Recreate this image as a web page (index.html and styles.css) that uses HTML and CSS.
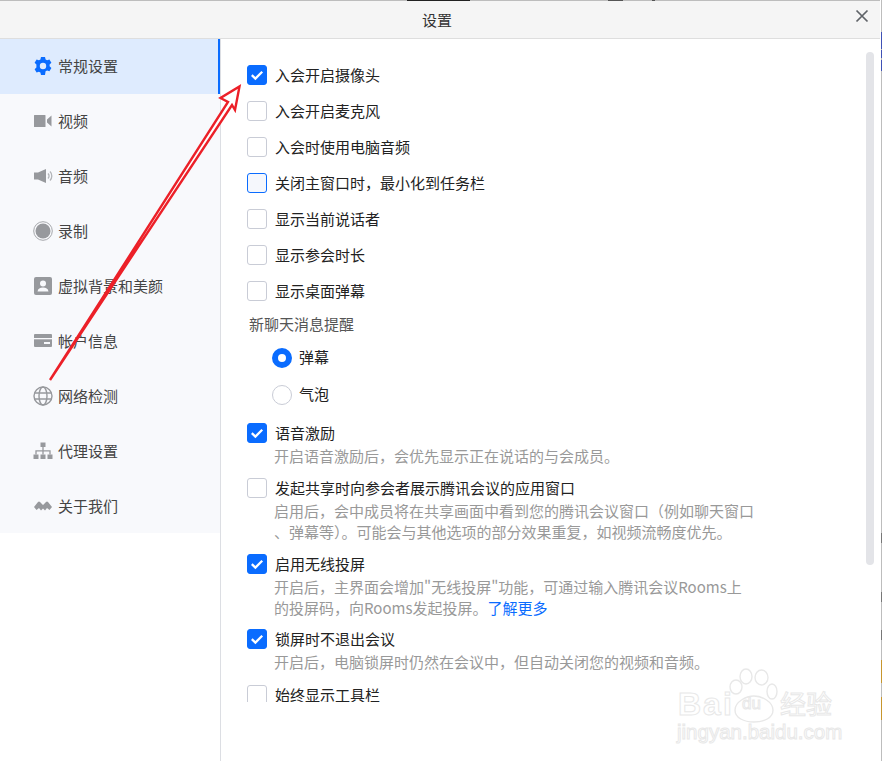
FILE: index.html
```html
<!DOCTYPE html>
<html lang="zh-CN">
<head>
<meta charset="utf-8">
<title>设置</title>
<link rel="stylesheet" href="styles.css">
</head>
<body>
<div class="window">
  <header class="titlebar">
    <span class="title">设置</span>
    <svg class="close" width="14" height="14" viewBox="0 0 14 14"><path d="M1.500 1.500l11 11M12.500 1.500l-11 11" stroke="#5f6368" stroke-width="1.700" fill="none"/></svg>
  </header>
  <div class="body">
    <nav class="side">
      <div class="nav active">
        <svg class="ico" viewBox="0 0 20 20"><path fill="#0a6cff" fill-rule="evenodd" d="M8 1h4l.6 2.400 1.500.8 2.300-.8 2 3.400-1.800 1.700v1.700l1.800 1.700-2 3.400-2.300-.8-1.500.8L12 19H8l-.6-2.400-1.500-.8-2.300.8-2-3.400 1.800-1.700V8.500L1.600 6.800l2-3.400 2.300.8 1.500-.8zM10 6.800a3.200 3.200 0 1 0 0 6.400 3.200 3.200 0 0 0 0-6.400z"/></svg>
        <span>常规设置</span>
      </div>
      <div class="nav">
        <svg class="ico" viewBox="0 0 20 20"><path fill="#97999d" d="M1.500 4h10.500a.5.5 0 0 1 .5.5v11a.5.5 0 0 1-.5.5H1.500a.5.5 0 0 1-.5-.5v-11a.5.5 0 0 1 .5-.5zM14 8.500L18.500 4.500v11L14 11.500z"/></svg>
        <span>视频</span>
      </div>
      <div class="nav">
        <svg class="ico" viewBox="0 0 20 20"><path fill="#97999d" d="M1 6.500h4L13 3v14l-8-3.500H1z"/><path fill="none" stroke="#b3b5b9" stroke-width="1.300" d="M15 7.500a3.500 3.500 0 0 1 0 5M17 5.500a6.500 6.500 0 0 1 0 9"/></svg>
        <span>音频</span>
      </div>
      <div class="nav">
        <svg class="ico" viewBox="0 0 20 20"><circle cx="10" cy="10" r="9.300" fill="none" stroke="#a5a7ab" stroke-width="1"/><circle cx="10" cy="10" r="7.500" fill="#97999d"/></svg>
        <span>录制</span>
      </div>
      <div class="nav">
        <svg class="ico" viewBox="0 0 20 20"><rect x="1" y="1" width="18" height="18" rx="2" fill="#97999d"/><circle cx="10" cy="7.500" r="3" fill="#f8f9fc"/><path fill="#f8f9fc" d="M4.500 15.500c.5-3 2.500-4 5.500-4s5 1 5.500 4z"/></svg>
        <span>虚拟背景和美颜</span>
      </div>
      <div class="nav">
        <svg class="ico" viewBox="0 0 20 20"><rect x="1" y="3" width="18" height="13" rx="1" fill="#97999d"/><rect x="1" y="7" width="18" height="1.300" fill="#f8f9fc"/><rect x="11" y="11" width="6" height="2" fill="#f8f9fc"/></svg>
        <span>帐户信息</span>
      </div>
      <div class="nav">
        <svg class="ico" viewBox="0 0 20 20" fill="none" stroke="#97999d" stroke-width="1.400"><circle cx="10" cy="10" r="9"/><ellipse cx="10" cy="10" rx="4" ry="9"/><path d="M1.500 7h17M1.500 13h17"/></svg>
        <span>网络检测</span>
      </div>
      <div class="nav">
        <svg class="ico" viewBox="0 0 20 20"><path fill="#97999d" d="M7.500 1.500h5v4.500h-5zM.5 13.500h5V18h-5zM7.500 13.500h5V18h-5zM14.500 13.500h5V18h-5z"/><path fill="none" stroke="#97999d" stroke-width="1.300" d="M10 6v7.500M3 13.500V9.800h14v3.700"/></svg>
        <span>代理设置</span>
      </div>
      <div class="nav">
        <svg class="ico" viewBox="0 0 20 20"><path fill="#97999d" d="M1 11L5 6Q6 5 7 6L10 9 13 6Q14 5 15 6L19 11 16.500 14 14 12 12 14.500 10 12.500 8 14.500 6 12 3.500 14Z"/></svg>
        <span>关于我们</span>
      </div>
    </nav>
    <main class="main">
      <div class="scroll">
        <div class="opt"><span class="box on"><svg viewBox="0 0 20 20"><path d="M4.800 10.200l3.600 3.400 6.800-6.800" fill="none" stroke="#fff" stroke-width="2.300"/></svg></span><span class="label">入会开启摄像头</span></div>
        <div class="opt"><span class="box"></span><span class="label">入会开启麦克风</span></div>
        <div class="opt"><span class="box"></span><span class="label">入会时使用电脑音频</span></div>
        <div class="opt"><span class="box hover"></span><span class="label">关闭主窗口时，最小化到任务栏</span></div>
        <div class="opt"><span class="box"></span><span class="label">显示当前说话者</span></div>
        <div class="opt"><span class="box"></span><span class="label">显示参会时长</span></div>
        <div class="opt"><span class="box"></span><span class="label">显示桌面弹幕</span></div>
        <div class="group-label">新聊天消息提醒</div>
        <div class="radio-row"><span class="radio on"></span><span class="label">弹幕</span></div>
        <div class="radio-row"><span class="radio"></span><span class="label">气泡</span></div>
        <div class="opt tall gap-voice"><span class="box on"><svg viewBox="0 0 20 20"><path d="M4.800 10.200l3.600 3.400 6.800-6.800" fill="none" stroke="#fff" stroke-width="2.300"/></svg></span><span class="label">语音激励</span></div>
        <p class="desc">开启语音激励后，会优先显示正在说话的与会成员。</p>
        <div class="opt tall gap-share"><span class="box"></span><span class="label">发起共享时向参会者展示腾讯会议的应用窗口</span></div>
        <p class="desc">启用后，会中成员将在共享画面中看到您的腾讯会议窗口（例如聊天窗口<br>、弹幕等）。可能会与其他选项的部分效果重复，如视频流畅度优先。</p>
        <div class="opt tall gap-share"><span class="box on"><svg viewBox="0 0 20 20"><path d="M4.800 10.200l3.600 3.400 6.800-6.800" fill="none" stroke="#fff" stroke-width="2.300"/></svg></span><span class="label">启用无线投屏</span></div>
        <p class="desc">开启后，主界面会增加"无线投屏"功能，可通过输入腾讯会议Rooms上<br>的投屏码，向Rooms发起投屏。<a class="link">了解更多</a></p>
        <div class="opt tall gap-lock"><span class="box on"><svg viewBox="0 0 20 20"><path d="M4.800 10.200l3.600 3.400 6.800-6.800" fill="none" stroke="#fff" stroke-width="2.300"/></svg></span><span class="label">锁屏时不退出会议</span></div>
        <p class="desc">开启后，电脑锁屏时仍然在会议中，但自动关闭您的视频和音频。</p>
        <div class="opt tall gap-bar"><span class="box"></span><span class="label">始终显示工具栏</span></div>
      </div>
      <div class="thumb"></div>
    </main>
  </div>
</div>
<div class="edge"></div>
<svg class="arrow" width="882" height="761" viewBox="0 0 882 761">
  <path d="M50 380 L228 102 L220.500 98 L239.500 86.500 L235 110 L232 105 Z" fill="#fff" stroke="#ec2028" stroke-width="2.400" stroke-linejoin="miter"/>
</svg>
<div class="mark">
  <svg class="paw" width="62" height="62" viewBox="0 0 62 62" fill="none" stroke="#e8e8e8" stroke-width="1.400"><ellipse cx="20" cy="10.500" rx="6" ry="7.500"/><ellipse cx="35.500" cy="11.500" rx="6.500" ry="7.500"/><ellipse cx="46" cy="25.500" rx="5" ry="7.500"/><ellipse cx="10" cy="21" rx="6" ry="7"/><path d="M9 44C9 36 20 30 28 30S47 36 47 44C47 52 38 56 28 56S9 52 9 44Z"/></svg>
  <span class="mark-bai">Bai</span><span class="mark-du">du</span><span class="mark-jy">经验</span>
  <span class="mark-url">jingyan.baidu.com</span>
</div>
</body>
</html>
```

FILE: styles.css
```css
* { box-sizing: border-box; }
html, body { margin: 0; padding: 0; background: #fff; }
body {
  position: relative;
  width: 882px;
  height: 761px;
  overflow: hidden;
  font-family: "Noto Sans CJK SC", "Noto Sans", sans-serif;
  font-size: 15px;
  color: #222;
}
.window {
  width: 880px;
  height: 761px;
  display: flex;
  flex-direction: column;
  background: #fff;
  border-top: 1px solid;
  border-image: linear-gradient(90deg, #bdbdbd 0 407px, #222 407px 470px, #bdbdbd 470px 608px, #555 608px 623px, #bdbdbd 623px 652px, #555 652px 655px, #bdbdbd 655px) 1;
}
.titlebar {
  height: 38px;
  flex: none;
  background: #f5f5f5;
  border-bottom: 1px solid #dedede;
  display: flex;
  align-items: center;
  justify-content: center;
  padding-right: 6px;
  position: relative;
}
.title { font-size: 15px; color: #333; }
.close { position: absolute; right: 11px; top: 8px; }
.body { flex: 1; display: flex; min-height: 0; }
.side {
  width: 221px;
  flex: none;
  border-right: 1px solid #dcdee3;
  background: linear-gradient(#f8f9fc 0 494px, #fff 494px);
  color: #444;
}
.nav {
  height: 55px;
  display: flex;
  align-items: center;
  padding: 0 0 1px 33px;
  gap: 5px;
}
.nav span { margin-top: -2px; }
.nav.active {
  background: #deebfe;
  border-right: 2px solid #0a6cff;
}
.ico { width: 20px; height: 20px; flex: none; }
.main { flex: 1; position: relative; min-width: 0; }
.scroll {
  height: 663px;
  overflow: hidden;
  padding: 18px 0 0 26px;
}
.opt {
  height: 36px;
  display: flex;
  align-items: center;
  gap: 8px;
  color: #222;
}
.opt.tall { height: 24px; }
.label { margin-top: -2px; }
.gap-voice { margin-top: 8px; }
.gap-share { margin-top: 10px; }
.gap-lock { margin-top: 9px; }
.gap-bar { margin-top: 11px; }
.box {
  width: 20px;
  height: 20px;
  flex: none;
  border: 1.500px solid #c9ccd6;
  border-radius: 3px;
  background: #fff;
}
.box svg { display: block; width: 20px; height: 20px; margin: -1.500px; }
.box.on { background: #0a6cff; border-color: #0a6cff; }
.box.hover { border-color: #0a6cff; background: #f5f7fc; }
.group-label {
  height: 30px;
  line-height: 30px;
  margin-left: 2px;
  color: #555;
}
.radio-row {
  height: 37px;
  display: flex;
  align-items: center;
  gap: 7px;
  margin-left: 25px;
}
.radio {
  width: 20px;
  height: 20px;
  flex: none;
  border-radius: 50%;
  border: 1.500px solid #c9ccd6;
  background: #fff;
}
.radio.on { border: 6.500px solid #0a6cff; }
.desc {
  margin: 0;
  padding-left: 27px;
  line-height: 21px;
  color: #999;
}
.link { color: #0a6cff; }
.thumb {
  position: absolute;
  left: 645px;
  top: 13px;
  width: 8px;
  height: 513px;
  border-radius: 4px;
  background: #e3e4e8;
}
.edge {
  position: absolute;
  right: 0;
  top: 0;
  width: 1px;
  height: 761px;
  background: linear-gradient(#bdbdbd 0 32px, #3f51b5 32px 49px, #bdbdbd 49px 50px, #3f51b5 50px 58px, #bdbdbd 58px 60px, #3f51b5 60px 71px, #bdbdbd 71px 533px, #777 533px 543px, #bdbdbd 543px 592px, #777 592px 602px, #bdbdbd 602px 630px, #777 630px 640px, #bdbdbd 640px 660px, #c7962e 660px 683px, #bdbdbd 683px 697px, #c7962e 697px 720px, #bdbdbd 720px);
}
.arrow { position: absolute; left: 0; top: 0; pointer-events: none; }
.mark {
  position: absolute;
  left: 676px;
  top: 664px;
  width: 160px;
  height: 80px;
  color: transparent;
  -webkit-text-stroke: 1px #e8e8e8;
  font-family: "Liberation Sans", sans-serif;
}
.paw { position: absolute; left: 50px; top: 2px; }
.mark-bai { position: absolute; left: 2px; top: 20px; font-size: 32px; font-weight: 700; line-height: 40px; letter-spacing: 2px; }
.mark-du { position: absolute; left: 66px; top: 30px; font-size: 17px; line-height: 20px; }
.mark-jy { position: absolute; left: 104px; top: 24px; font-size: 26px; line-height: 30px; font-family: "Noto Sans CJK SC", sans-serif; }
.mark-url { position: absolute; left: 1px; top: 56px; font-size: 20.500px; line-height: 24px; white-space: nowrap; }
```
